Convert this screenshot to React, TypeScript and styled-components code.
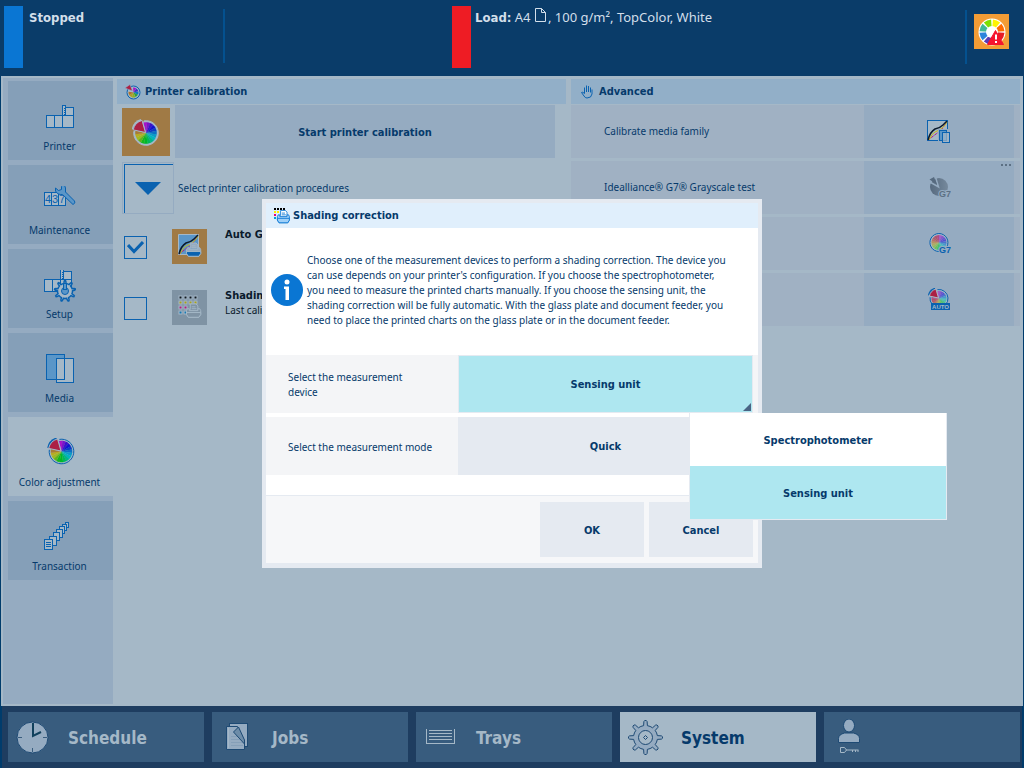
import React from "react";
import styled, { createGlobalStyle } from "styled-components";

const c = {
  frame: "#003c6c",
  header: "#0a3c69",
  line: "#0a62b0",
  mid: "#5a96c8",
  panel: "#a5b8c7",
  side: "#95abc1",
  tile: "#859fb8",
  bar: "#92afc8",
  row: "#a0b1c3",
  navy: "#063a6b",
  orange: "#a07a45",
  cyan: "#aee7f0",
  soft: "#e5eaf1",
};

const strongFont = `"DejaVu Sans Condensed", "DejaVu Sans", sans-serif`;

const GlobalStyle = createGlobalStyle`
  *, *::before, *::after { box-sizing: border-box; }
  body { margin: 0; background: ${c.frame}; }
  body, button, select, input {
    font-family: "Noto Sans", sans-serif;
    font-size: 10px;
    line-height: 15px;
    color: ${c.navy};
  }
  strong { font-family: ${strongFont}; font-stretch: condensed; }
  button, select { border: 0; padding: 0; cursor: pointer; }
  svg { display: block; flex: none; }
  h1, h2, p, ul { margin: 0; padding: 0; list-style: none; font-size: inherit; }
`;

const Page = styled.div`
  display: flex;
  flex-direction: column;
  min-height: 100vh;
`;

/* ---------- status header ---------- */
const Header = styled.header`
  display: grid;
  grid-template-columns: 448px 1fr auto;
  align-items: start;
  height: 76px;
  padding: 6px 15px 0 4px;
  background: ${c.header};
  font-size: 13px;
  color: #d3dfea;
`;
const StatusBlock = styled.div`
  display: flex;
  gap: 4px;
`;
const DividedBlock = styled(StatusBlock)`
  gap: 6px;
  width: 221px;

  &::after {
    content: "";
    width: 2px;
    height: 54px;
    margin: 3px 0 0 auto;
    background: #04518f;
  }
`;
const StatusBar = styled.span<{ $color: string }>`
  width: 19px;
  height: 62px;
  background: ${(p) => p.$color};
`;
const StatusText = styled.p`
  display: flex;
  align-items: center;
  height: 22px;
  white-space: pre;
`;
const AlertArea = styled.div`
  height: 54px;
  margin-top: 4px;
  padding: 4px 0 0 7px;
  border-left: 2px solid #04518f;
`;
const AlertButton = styled.button`
  display: grid;
  place-items: center;
  width: 35px;
  height: 35px;
  background: #f39c35;
`;

/* ---------- main area ---------- */
const Main = styled.main`
  display: flex;
  flex: 1;
  margin: 0 1px;
  padding: 2px 3px 2px 2px;
  background: ${c.panel};
`;
const Sidebar = styled.nav`
  display: flex;
  flex-direction: column;
  gap: 5px;
  width: 110px;
  padding: 3px 0 0 5px;
  background: ${c.side};
`;
const SideItem = styled.button<{ $active?: boolean }>`
  display: flex;
  flex-direction: column;
  align-items: center;
  justify-content: flex-end;
  gap: 5px;
  height: 79px;
  padding: 0 2px 6px 0;
  background: ${(p) => (p.$active ? c.panel : c.tile)};
`;
const Columns = styled.div`
  display: grid;
  grid-template-columns: 1fr 1fr;
  gap: 5px;
  flex: 1;
  padding: 1px 0 0 4px;
`;
const Column = styled.section`
  display: flex;
  flex-direction: column;
  gap: 1px;
`;
const ColumnTitle = styled.h2`
  display: flex;
  align-items: center;
  gap: 4px;
  height: 25px;
  padding-left: 8px;
  background: ${c.bar};
  font-size: 11px;
`;
const StartRow = styled.div`
  display: flex;
  align-items: center;
  gap: 5px;
  padding: 0 11px 0 5px;
`;
const IconTile = styled.span<{ $size: number; $bg: string }>`
  display: grid;
  place-items: center;
  flex: none;
  width: ${(p) => p.$size}px;
  height: ${(p) => p.$size}px;
  background: ${(p) => p.$bg};
`;
const StartButton = styled.button`
  flex: 1;
  height: 53px;
  background: ${c.side};
  font-size: 11px;
`;
const ProcedureHead = styled.div`
  display: flex;
  align-items: center;
  gap: 4px;
  padding: 3px 0 0 5px;
`;
const ExpandButton = styled.button`
  display: grid;
  place-items: center;
  width: 52px;
  height: 52px;
  border: 1px solid ${c.side};
  background: ${c.panel};
  box-shadow: inset 1px 1px 0 ${c.panel}, inset 2px 2px 0 ${c.line};
`;
const ProcedureList = styled.ul`
  display: flex;
  flex-direction: column;
  gap: 25px;
  padding: 13px 0 0 7px;
`;
const Procedure = styled.li`
  display: flex;
  align-items: center;
  gap: 18px;
  color: #0a1a2c;
`;
const ProcedureLabel = styled.label`
  display: flex;
  align-items: center;
  gap: 25px;
`;
const Tick = styled.span`
  display: grid;
  place-items: center;
  padding-top: 2px;
  > * { grid-area: 1 / 1; }
  svg { pointer-events: none; }
`;
const TickInput = styled.input`
  appearance: none;
  width: 23px;
  height: 23px;
  margin: 0;
  border: 1px solid ${c.line};
`;
const ProcedureText = styled.span`
  display: flex;
  flex-direction: column;
  min-height: 36px;
  line-height: 14px;
  white-space: nowrap;

  strong { font-size: 11px; }
`;
const AdvancedList = styled.ul`
  display: flex;
  flex-direction: column;
  gap: 3px;
`;
const AdvancedRow = styled.li`
  display: flex;
  align-items: center;
  height: 53px;
  padding: 0 6px 0 33px;
  background: ${c.row};
`;
const AdvancedButton = styled.button`
  position: relative;
  display: grid;
  place-items: center;
  width: 150px;
  height: 53px;
  margin-left: auto;
  background: ${c.side};
`;
const MoreDots = styled.svg`
  position: absolute;
  top: 3px;
  right: 3px;
`;

/* ---------- bottom navigation ---------- */
const BottomNav = styled.nav`
  display: grid;
  grid-template-columns: repeat(5, 1fr);
  gap: 8px;
  height: 62px;
  margin: 0 2px;
  padding: 6px 2px 6px 6px;
  background: #1e3d60;
`;
const NavButton = styled.button<{ $active?: boolean }>`
  display: flex;
  align-items: center;
  gap: ${(p) => (p.$active ? 17 : 16)}px;
  padding-left: 8px;
  background: ${(p) => (p.$active ? c.panel : "#385c7e")};
  color: ${(p) => (p.$active ? c.navy : c.panel)};
  font-size: 17px;

  strong { padding-top: 2px; }
`;

/* ---------- dialog ---------- */
const Overlay = styled.div`
  position: fixed;
  inset: 0;
  display: flex;
  align-items: center;
  justify-content: center;
  padding-bottom: 1px;
`;
const Dialog = styled.div`
  width: 500px;
  border: 4px solid ${c.soft};
  border-bottom-width: 5px;
  background: #fff;
`;
const DialogTitle = styled.h1`
  display: flex;
  align-items: center;
  gap: 3px;
  height: 25px;
  padding-left: 8px;
  background: #e0effc;
  font-size: 11px;
`;
const Intro = styled.div`
  display: flex;
  align-items: center;
  gap: 4px;
  height: 127px;
  padding: 0 28px 3px 5px;
`;
const Fields = styled.div`
  display: flex;
  flex-direction: column;
  gap: 4px;
  padding-bottom: 20px;
`;
const Field = styled.div`
  position: relative;
  display: grid;
  grid-template-columns: 192px 1fr;
  align-items: center;
  height: 58px;
  padding-right: 5px;
  background: #f4f5f7;
`;
const FieldLabel = styled.label`
  padding: 2px 40px 0 22px;
`;
const WideLabel = styled(FieldLabel)`
  padding-right: 0;
`;
const DeviceSelect = styled.select`
  appearance: none;
  width: 100%;
  height: 58px;
  border: 1px solid ${c.soft};
  background: ${c.cyan};
  border-radius: 0;
  font-family: ${strongFont};
  font-stretch: condensed;
  font-size: 11px;
  font-weight: bold;
  text-align: center;
  text-align-last: center;
`;
const Corner = styled.svg`
  position: absolute;
  right: 7px;
  bottom: 2px;
  pointer-events: none;
`;
const FieldButton = styled.button`
  height: 58px;
  background: ${c.soft};
  font-size: 11px;
`;
const Menu = styled.ul`
  position: absolute;
  z-index: 1;
  top: 58px;
  left: 423px;
  width: 258px;
  border: 1px solid ${c.soft};
  border-top: 0;
`;
const MenuItem = styled.button<{ $active?: boolean }>`
  display: block;
  width: 100%;
  height: 53px;
  background: ${(p) => (p.$active ? c.cyan : "#fff")};
  font-size: 11px;
`;
const Footer = styled.div`
  display: flex;
  justify-content: flex-end;
  gap: 5px;
  padding: 6px 5px 6px;
  border-top: 1px solid ${c.soft};
  background: #f6f7f9;
`;
const FooterButton = styled.button`
  width: 104px;
  height: 55px;
  background: ${c.soft};
  font-size: 11px;
`;

/* ---------- drawings ---------- */
const polar = (cx: number, cy: number, r: number, deg: number) => {
  const a = ((deg - 90) * Math.PI) / 180;
  return `${(cx + r * Math.cos(a)).toFixed(2)} ${(cy + r * Math.sin(a)).toFixed(2)}`;
};
const wedge = (cx: number, cy: number, r: number, from: number, to: number) =>
  `M${cx} ${cy}L${polar(cx, cy, r, from)}A${r} ${r} 0 0 1 ${polar(cx, cy, r, to)}Z`;

const gearPath = (cx: number, cy: number, inner: number, outer: number, teeth: number) => {
  const step = 360 / teeth;
  let d = "";
  for (let i = 0; i < teeth; i++) {
    const a = i * step;
    d += `${i ? "L" : "M"}${polar(cx, cy, inner, a - step * 0.2)}L${polar(cx, cy, outer - 1, a - step * 0.13)}L${polar(cx, cy, outer, a - step * 0.06)}L${polar(cx, cy, outer, a + step * 0.06)}L${polar(cx, cy, outer - 1, a + step * 0.13)}L${polar(cx, cy, inner, a + step * 0.2)}A${inner} ${inner} 0 0 1 ${polar(cx, cy, inner, a + step * 0.8)}`;
  }
  return d + "Z";
};

const hueSets = {
  vivid: ["#a614c8", "#7a14c8", "#3c12c8", "#1410d0", "#0c3cc4", "#0a70c4", "#0a9cc8", "#00b4c0", "#00b48c", "#00b85a", "#00b828", "#14b81c", "#5cb41e", "#a0b820", "#b8ac20", "#a87c34"],
  pastel: ["#a85cc4", "#8a56c8", "#6a54cc", "#5450d0", "#4a74cc", "#4a98cc", "#4cb4c4", "#4cc0b0", "#4cc08c", "#4cc06c", "#6cc060", "#94bc60", "#b0ac60", "#b89460", "#b87464", "#b05c68", "#b0506c", "#b04c80"],
};

type WheelProps = { cx: number; cy: number; r: number; ring: string; kind?: keyof typeof hueSets; slice?: string };
const Wheel = ({ cx, cy, r, ring, kind = "vivid", slice }: WheelProps) => {
  const hues = hueSets[kind];
  const start = slice ? -14 : 0;
  const step = (slice ? 296 : 360) / hues.length;
  const o = r + 1.5;
  return (
    <g>
      <path
        d={slice ? `M${polar(cx, cy, o, -10)}A${o} ${o} 0 1 1 ${polar(cx, cy, o, 278)}` : `M${polar(cx, cy, o, 0)}A${o} ${o} 0 1 1 ${polar(cx, cy, o, 359)}Z`}
        fill={c.panel}
        stroke={ring}
      />
      {hues.map((h, i) => (
        <path key={i} d={wedge(cx, cy, r, start + i * step, start + (i + 1) * step + 1)} fill={h} />
      ))}
      {slice && (
        <>
          <path d={wedge(cx - 1.5, cy - 1.5, r + 2.2, 280, 344)} fill={ring} />
          <path d={wedge(cx - 0.5, cy - 0.5, r + 1.8, 282, 344)} fill={slice} stroke={c.panel} strokeWidth="1" />
        </>
      )}
    </g>
  );
};

const WheelIcon = ({ size, ring = c.line }: { size: number; ring?: string }) => (
  <svg width={size} height={size} viewBox="0 0 28 28" aria-hidden="true">
    <Wheel cx={14} cy={15} r={10.8} ring={ring} slice="#ac2044" />
  </svg>
);

const TitleWheelIcon = () => (
  <svg width="16" height="16" viewBox="0 0 16 16" aria-hidden="true">
    <circle cx="8.5" cy="8.5" r="6.5" fill={c.panel} stroke={c.line} />
    {["#a614c8", "#3c30c8", "#0a78c4", "#2ca040", "#8cb020", "#b09c28", "#b0702c"].map((h, i) => (
      <path key={h} d={wedge(8.5, 8.5, 5, -5 + i * 41, 34 + i * 41)} fill={h} />
    ))}
    <path d="M0 4 5 .5 7.5 7Z" fill="#ac2044" stroke={c.bar} strokeWidth="0.6" />
  </svg>
);

const PrinterShape = () => (
  <g fill={c.panel} stroke={c.line} shapeRendering="crispEdges">
    <rect x="2.5" y="13.5" width="8" height="12" />
    <rect x="10.5" y="13.5" width="8" height="12" />
    <rect x="21.5" y="5.5" width="8" height="8" />
    <rect x="18.5" y="13.5" width="11" height="12" />
    <rect x="18.5" y="3.5" width="3" height="10" />
    <path d="M20 5.5v7" strokeDasharray="1 1" />
  </g>
);
const SideIcon = ({ name }: { name: string }) => (
  <svg width="32" height="32" viewBox="0 0 32 32" aria-hidden="true">
    {name === "Printer" && <PrinterShape />}
    {name === "Maintenance" && (
      <g transform="translate(0 -5)">
        <g fill={c.panel} stroke={c.line} shapeRendering="crispEdges">
          <rect x="0.5" y="11.5" width="21" height="13" />
          <path d="M7.5 11v14M14.5 11v14" />
        </g>
        <g fill={c.line} fontFamily="Liberation Sans, sans-serif" fontSize="11">
          <text x="1" y="22">4</text>
          <text x="8" y="22">3</text>
          <text x="15" y="22">7</text>
        </g>
        <path d="M15.5 2.5q5 0 6 4.5v4l9 9q1.5 2-1.500 3.500L18.500 13.500q-5 .5-7-3.500V7l3 2.500 3-1V5.500Z" fill={c.mid} stroke={c.line} />
      </g>
    )}
    {name === "Setup" && (
      <>
        <g transform="translate(-2 -4)"><PrinterShape /></g>
        <path d={gearPath(21, 21, 7.5, 10.5, 9)} fill={c.panel} stroke={c.line} strokeWidth="1.5" />
        <circle cx="21" cy="21" r="3.5" fill={c.mid} stroke={c.line} />
        <rect x="19.5" y="13.5" width="3" height="6" fill={c.mid} stroke={c.line} />
      </>
    )}
    {name === "Media" && (
      <g stroke={c.line} shapeRendering="crispEdges">
        <rect x="2.5" y="0.5" width="18" height="25" fill={c.mid} />
        <rect x="12.5" y="4.5" width="17" height="24" fill={c.panel} />
        <path d="M20.5 4v21.5H12.5" fill="none" />
      </g>
    )}
    {name === "Color adjustment" && <Wheel cx={17.5} cy={13.5} r={10.8} ring={c.line} slice="#ac2044" />}
    {name === "Transaction" && (
      <g fill={c.panel} stroke={c.line} shapeRendering="crispEdges" transform="translate(0 -2)">
        {[[20.5, 3.5, 3], [17.5, 5.5, 4], [14.5, 7.5, 5], [11.5, 10.5, 6], [8.5, 13.5, 6], [4.5, 17.5, 7]].map(([x, y, s]) => (
          <rect key={x} x={x + 1} y={y - 1} width={s} height={s + 2} />
        ))}
        <rect x="0.5" y="19.5" width="8" height="10" />
        <path d="M2 22.5h5M2 24.5h5M2 26.5h5" />
      </g>
    )}
  </svg>
);

const AlertIcon = () => {
  const hues = ["#fff200", "#ff6a00", "#e81c24", "#c81e50", "#5a3cb4", "#2c84dc", "#40b896", "#7ee000"];
  return (
    <svg width="31" height="31" viewBox="0 0 31 31" aria-hidden="true">
      <circle cx="16" cy="16" r="13.5" fill="#fff" />
      {hues.map((h, i) => (
        <path key={h} d={wedge(16, 16, 12.5, i * 45 + 4, i * 45 + 41)} fill={h} />
      ))}
      <circle cx="16" cy="16" r="6" fill="#fff" />
      <path d="M19.5 14.5 27.5 28.5H11.5Z" fill="#f5142e" stroke="#f5142e" />
      <path d="M20 18.5v5M20 25v2" stroke="#fff" strokeWidth="2" />
    </svg>
  );
};

const PaperIcon = () => (
  <svg width="14" height="18" viewBox="0 0 14 18" aria-hidden="true">
    <path d="M1.5.5h6l4 4v9h-10ZM7.5.5v4h4" fill="none" stroke="#d3dfea" />
  </svg>
);

const HandIcon = () => (
  <svg width="16" height="14" viewBox="0 0 16 14" aria-hidden="true">
    <path d="M5.5 8.5V2.5M7.5 7V.5M9.5 7V1M11.5 7.5V2.5M13 4.5V9q-.5 4-5 4-2 0-3-2L2.5 7.5q1-1 3 1" fill="none" stroke={c.line} />
  </svg>
);

const SmallPrinter = ({ paper, body, edge, tray }: { paper: string; body: string; edge: string; tray?: string }) => (
  <g stroke={edge}>
    <path d="M4.5 6.5V.5h6l2 2v4" fill={paper} />
    <path d="M6 3.5h4M6 5.5h5" />
    <path d="M3.5 5.5h-2l-1 2v4l2 3h11l2-3v-4l-1-2h-2v2h-9Z" fill={tray ?? body} />
    <path d="M.5 9.5h15v2l-2 3h-11l-2-3Z" fill={body} />
  </g>
);

const ShadingTitleIcon = () => (
  <svg width="16" height="16" viewBox="0 0 16 16" aria-hidden="true">
    <g shapeRendering="crispEdges">
      <path d="M0 1h2M3 1h2M6 1h2M9 1h2" stroke="#000" strokeWidth="2" />
      <path d="M0 4h2M3 4h2" stroke="#ffee00" strokeWidth="2" />
      <path d="M0 7h2" stroke="#e6007e" strokeWidth="2" />
      <path d="M0 10h2" stroke="#009ee0" strokeWidth="2" />
    </g>
    <g transform="translate(3 2) scale(.8 .88)">
      <SmallPrinter paper="#fff" body="#9fd0f8" edge="#0a76d3" />
    </g>
  </svg>
);

const CurveLines = () => (
  <g fill="none">
    <path d="M1 20 13 11q4-4 6-9" stroke="#b01c80" strokeDasharray="3 1" />
    <path d="M2 20q3-7 6-8 5-2 7-4 3-2 5-6" stroke="#c8b818" />
    <path d="M1 20q2-8 7-11 5-1 8-4l4-4" stroke="#0a1a2c" strokeWidth="1.5" />
  </g>
);
const GradationIcon = () => (
  <svg width="24" height="24" viewBox="0 0 24 24" aria-hidden="true">
    <path d="M.5.5h20v20H.5Z" fill={c.mid} stroke={c.panel} />
    <CurveLines />
    <g transform="translate(8 8.5) scale(.95)">
      <SmallPrinter paper={c.side} body={c.line} tray={c.side} edge={c.panel} />
    </g>
  </svg>
);
const ShadingIcon = () => (
  <svg width="24" height="24" viewBox="0 0 24 24" aria-hidden="true">
    {["#101820", "#a8a018", "#b01c80", "#1478b4"].map((color, row) =>
      Array.from({ length: row < 2 ? 4 : 2 }, (_, i) => (
        <rect key={`${row}-${i}`} x={i * 5 + 1} y={row * 5 + 1} width="3" height="3" fill={color} stroke={c.panel} />
      )),
    )}
    <g transform="translate(8 8.5) scale(.95)">
      <SmallPrinter paper="#7f93a4" body="#7f93a4" edge={c.panel} />
    </g>
  </svg>
);

const G7 = ({ color }: { color: string }) => (
  <text
    x="12"
    y="21"
    fontSize="9"
    fontWeight="bold"
    fontFamily="Liberation Sans, sans-serif"
    fill={color}
    stroke={c.side}
    strokeWidth="2"
    paintOrder="stroke"
  >
    G7
  </text>
);
const AdvancedIcon = ({ kind }: { kind: string }) => (
  <svg width="24" height="24" viewBox="0 0 24 24" aria-hidden="true">
    {kind === "media" && (
      <>
        <rect x="0.5" y="0.5" width="20" height="20" fill={c.panel} stroke={c.line} />
        <CurveLines />
        <g stroke={c.line} shapeRendering="crispEdges">
          <rect x="11" y="9" width="13" height="15" fill={c.side} stroke="none" />
          <rect x="12.5" y="10.5" width="7" height="10" fill={c.mid} />
          <rect x="15.5" y="12.5" width="7" height="10" fill={c.panel} fillOpacity="0.7" />
        </g>
      </>
    )}
    {kind === "g7grey" && (
      <>
        <defs>
          <linearGradient id="grey-wheel">
            <stop offset="0" stopColor="#566a7f" />
            <stop offset="1" stopColor="#76899c" />
          </linearGradient>
        </defs>
        <circle cx="12" cy="11" r="9" fill="url(#grey-wheel)" />
        <path d="M2 5.500 11.500 11 8.500 1" fill="none" stroke={c.side} strokeWidth="1.5" />
        <path d="M2.500 3.500 7 1l3 7.500Z" fill="#566a7f" />
        <G7 color="#5c7084" />
      </>
    )}
    {kind === "g7" && (
      <>
        <Wheel cx={12} cy={10.5} r={7.5} ring={c.line} kind="pastel" />
        <G7 color={c.line} />
      </>
    )}
    {kind === "auto" && (
      <>
        <Wheel cx={12} cy={10.5} r={7.5} ring={c.line} kind="pastel" slice="#ac2044" />
        <rect x="4" y="15" width="19" height="7" fill={c.line} />
        <text x="13.5" y="21" textAnchor="middle" fontSize="6" fontWeight="bold" fontFamily="Liberation Sans, sans-serif" fill={c.panel}>AUTO</text>
      </>
    )}
  </svg>
);

const NavIcon = ({ name }: { name: string }) => (
  <svg width="36" height="36" viewBox="0 0 36 36" aria-hidden="true">
    {name === "Schedule" && (
      <>
        <circle cx="16.5" cy="18.5" r="15.5" fill={c.side} stroke="#1e4a74" />
        <path d="M2 18.5h4M27 18.5h4M16.5 29v4" stroke="#385c7e" />
        <path d="M17 4v13l8-4" fill="none" stroke="#10405c" strokeWidth="2" />
      </>
    )}
    {name === "Jobs" && (
      <>
        <rect x="9.5" y="4.5" width="18" height="23" fill={c.side} stroke="#1e4a74" />
        <path d="M6.5 7.5h11l7 15v8h-18Z" fill={c.side} stroke="#1e4a74" />
        <path d="M8.5 9v20" stroke={c.panel} />
        <path d="M11 17.5h6M11 20.5h10M11 23.5h12M11 26.5h12" stroke={c.tile} />
        <path d="m13.5 13 5-5 6 13v4Z" fill="#6d8ca8" stroke="#1e4a74" />
      </>
    )}
    {name === "Trays" && (
      <g fill="none" stroke={c.panel} shapeRendering="crispEdges">
        <path d="M2.5 10v14.5h28V10" />
        <path d="M5 11.5h23M5 14.5h23M5 17.5h23M5 20.5h23" />
      </g>
    )}
    {name === "System" && (
      <g stroke="#1e4a74">
        <path d={gearPath(17.5, 18.5, 12, 17, 8)} fill={c.side} />
        <circle cx="17.5" cy="18.5" r="7" fill={c.panel} />
        <path d="m17.5 16.5 2 2-2 2-2-2Z" fill="none" />
      </g>
    )}
    {name === "User" && (
      <>
        <g fill={c.side} stroke="#1e4a74">
          <ellipse cx="17" cy="6.5" rx="5.5" ry="6.5" />
          <path d="M6.5 23.5v-4q0-4 6-5.500h9q6 1.500 6 5.500v4Z" />
        </g>
        <g fill="none" stroke={c.panel}>
          <path d="M8.500 28.500h4l2 2.500-2 2.500h-4Z" />
          <path d="M14 31h12.500M20.500 31v2M23.500 31v2M26 31v2" />
        </g>
      </>
    )}
  </svg>
);

const sideItems = ["Printer", "Maintenance", "Setup", "Media", "Color adjustment", "Transaction"];
const advanced = [
  { kind: "media", name: "Calibrate media family", text: "Calibrate media family" },
  { kind: "g7grey", name: "Grayscale test", text: "Idealliance® G7® Grayscale test" },
  { kind: "g7", name: "G7 calibration", text: "" },
  { kind: "auto", name: "Automatic calibration", text: "" },
];
const navItems = ["Schedule", "Jobs", "Trays", "System", "User"];

export default function App() {
  return (
    <Page>
      <GlobalStyle />
      <Header>
        <DividedBlock>
          <StatusBar $color="#0a76d3" />
          <StatusText><strong>Stopped</strong></StatusText>
        </DividedBlock>
        <StatusBlock>
          <StatusBar $color="#ee1c24" />
          <StatusText><strong>Load:</strong> A4 <PaperIcon />, 100 g/m², TopColor, White</StatusText>
        </StatusBlock>
        <AlertArea>
          <AlertButton aria-label="Color alert"><AlertIcon /></AlertButton>
        </AlertArea>
      </Header>

      <Main>
        <Sidebar>
          {sideItems.map((name) => (
            <SideItem key={name} $active={name === "Color adjustment"}>
              <SideIcon name={name} />
              {name}
            </SideItem>
          ))}
        </Sidebar>
        <Columns>
          <Column>
            <ColumnTitle><TitleWheelIcon /><strong>Printer calibration</strong></ColumnTitle>
            <StartRow>
              <IconTile $size={48} $bg={c.orange}><WheelIcon size={28} ring={c.panel} /></IconTile>
              <StartButton><strong>Start printer calibration</strong></StartButton>
            </StartRow>
            <ProcedureHead>
              <ExpandButton aria-label="Show procedures">
                <svg width="26" height="13" viewBox="0 0 26 13" aria-hidden="true">
                  <path d="M0 0h26L13 13Z" fill={c.line} />
                </svg>
              </ExpandButton>
              Select printer calibration procedures
            </ProcedureHead>
            <ProcedureList>
              <Procedure>
                <ProcedureLabel>
                  <Tick>
                    <TickInput type="checkbox" defaultChecked aria-label="Auto Gradation" />
                    <svg width="17" height="13" viewBox="0 0 17 13" aria-hidden="true">
                      <path d="m1 4 6 6.5L16 1" fill="none" stroke={c.line} strokeWidth="3" />
                    </svg>
                  </Tick>
                  <IconTile $size={35} $bg={c.orange}><GradationIcon /></IconTile>
                </ProcedureLabel>
                <ProcedureText><strong>Auto Gradation</strong></ProcedureText>
              </Procedure>
              <Procedure>
                <ProcedureLabel>
                  <Tick><TickInput type="checkbox" aria-label="Shading correction" /></Tick>
                  <IconTile $size={35} $bg="#7f93a4"><ShadingIcon /></IconTile>
                </ProcedureLabel>
                <ProcedureText><strong>Shading</strong><span>Last calibration</span></ProcedureText>
              </Procedure>
            </ProcedureList>
          </Column>
          <Column>
            <ColumnTitle><HandIcon /><strong>Advanced</strong></ColumnTitle>
            <AdvancedList>
              {advanced.map((a) => (
                <AdvancedRow key={a.kind}>
                  {a.text}
                  <AdvancedButton aria-label={a.name}>
                    <AdvancedIcon kind={a.kind} />
                    {a.kind === "g7grey" && (
                      <MoreDots width="10" height="2" viewBox="0 0 10 2" aria-hidden="true">
                        <path d="M0 1h2M4 1h2M8 1h2" stroke="#5c7084" strokeWidth="2" />
                      </MoreDots>
                    )}
                  </AdvancedButton>
                </AdvancedRow>
              ))}
            </AdvancedList>
          </Column>
        </Columns>
      </Main>

      <BottomNav>
        {navItems.map((name) => (
          <NavButton key={name} $active={name === "System"} aria-label={name}>
            <NavIcon name={name} />
            {name !== "User" && <strong>{name}</strong>}
          </NavButton>
        ))}
      </BottomNav>

      <Overlay>
        <Dialog role="dialog" aria-labelledby="dialog-title">
          <DialogTitle id="dialog-title"><ShadingTitleIcon /><strong>Shading correction</strong></DialogTitle>
          <Intro>
            <svg width="32" height="32" viewBox="0 0 32 32" aria-hidden="true">
              <circle cx="16" cy="16" r="16" fill="#0a76d3" />
              <circle cx="16" cy="8" r="2.5" fill="#fff" />
              <path d="M13 12.500h5V26h-3.500V15H13Z" fill="#fff" />
            </svg>
            <p>
              Choose one of the measurement devices to perform a shading correction. The device you
              can use depends on your printer's configuration. If you choose the spectrophotometer,
              you need to measure the printed charts manually. If you choose the sensing unit, the
              shading correction will be fully automatic. With the glass plate and document feeder, you
              need to place the printed charts on the glass plate or in the document feeder.
            </p>
          </Intro>
          <Fields>
            <Field>
              <FieldLabel htmlFor="device">Select the measurement device</FieldLabel>
              <DeviceSelect id="device" defaultValue="Sensing unit">
                <option>Spectrophotometer</option>
                <option>Sensing unit</option>
              </DeviceSelect>
              <Corner width="8" height="8" viewBox="0 0 8 8" aria-hidden="true">
                <path d="M8 0v8H0Z" fill="#4a6484" />
              </Corner>
              <Menu>
                <li><MenuItem><strong>Spectrophotometer</strong></MenuItem></li>
                <li><MenuItem $active><strong>Sensing unit</strong></MenuItem></li>
              </Menu>
            </Field>
            <Field>
              <WideLabel htmlFor="mode">Select the measurement mode</WideLabel>
              <FieldButton id="mode"><strong>Quick</strong></FieldButton>
            </Field>
          </Fields>
          <Footer>
            <FooterButton><strong>OK</strong></FooterButton>
            <FooterButton><strong>Cancel</strong></FooterButton>
          </Footer>
        </Dialog>
      </Overlay>
    </Page>
  );
}
